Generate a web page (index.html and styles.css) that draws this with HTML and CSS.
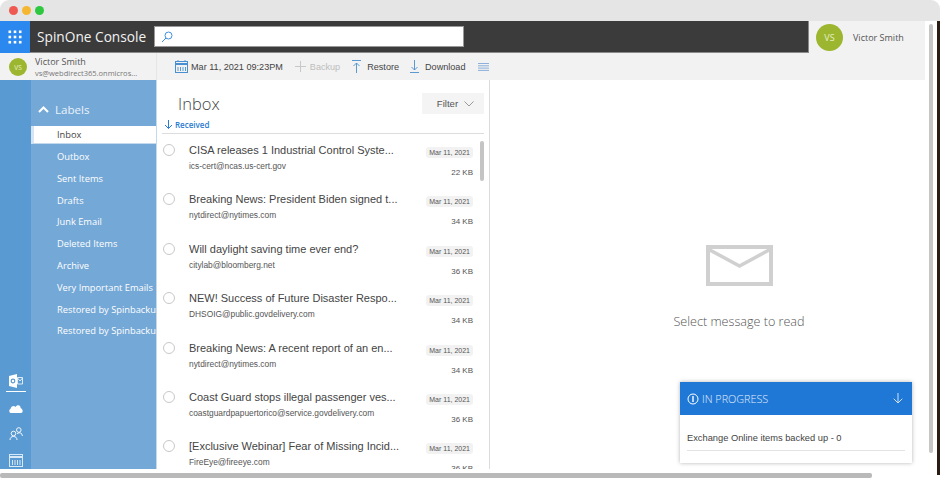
FILE: index.html
```html
<!DOCTYPE html>
<html lang="en">
<head>
    <meta charset="UTF-8">
    <title>SpinOne Console</title>
    <link rel="stylesheet" href="styles.css">
</head>
<body>
    <div class="window">
        <div class="titlebar">
            <span class="dot dot-red"></span>
            <span class="dot dot-yellow"></span>
            <span class="dot dot-green"></span>
        </div>

        <div class="app">
            <div class="topbar">
                <div class="waffle">
                    <svg width="14" height="14" viewBox="0 0 14 14" fill="#fff">
                        <rect x="0.5" y="0.5" width="2.6" height="2.6"/><rect x="5.7" y="0.5" width="2.6" height="2.6"/><rect x="10.9" y="0.5" width="2.6" height="2.6"/>
                        <rect x="0.5" y="5.7" width="2.6" height="2.6"/><rect x="5.7" y="5.7" width="2.6" height="2.6"/><rect x="10.9" y="5.7" width="2.6" height="2.6"/>
                        <rect x="0.5" y="10.9" width="2.6" height="2.6"/><rect x="5.7" y="10.9" width="2.6" height="2.6"/><rect x="10.9" y="10.9" width="2.6" height="2.6"/>
                    </svg>
                </div>
                <div class="brandbar">
                    <span class="brand">SpinOne Console</span>
                    <div class="search">
                        <svg width="12" height="12" viewBox="0 0 12 12" fill="none" stroke="#3f8fe0" stroke-width="1">
                            <circle cx="7.5" cy="4.5" r="3.5"/><path d="M5 7L1 11"/>
                        </svg>
                    </div>
                </div>
                <div class="top-user">
                    <span class="avatar avatar-big">VS</span>
                    <span class="top-user-name">Victor Smith</span>
                </div>
            </div>

            <div class="subbar">
                <div class="account">
                    <span class="avatar">VS</span>
                    <div class="account-text">
                        <div class="account-name">Victor Smith</div>
                        <div class="account-mail">vs@webdirect365.onmicros...</div>
                    </div>
                </div>
                <div class="toolbar">
                    <svg class="tool-icon tool-calendar" width="13" height="13" viewBox="0 0 13 13" fill="none" stroke="#4a8fcf">
                        <rect x="0.5" y="1.5" width="12" height="11"/>
                        <path d="M0.5 4H12.5" stroke-width="2"/>
                        <path d="M3 1V0M10 1V0M3 7V11M5.5 7V11M8 7V11M10.5 7V11" stroke-width="0.9"/>
                    </svg>
                    <span class="tool tool-date">Mar 11, 2021 09:23PM</span>
                    <svg class="tool-icon" width="11" height="11" viewBox="0 0 11 11" fill="none" stroke="#c8c8c8">
                        <path d="M5.5 0V11M0 5.5H11"/>
                    </svg>
                    <span class="tool tool-off">Backup</span>
                    <svg class="tool-icon tool-arrow" width="9" height="13" viewBox="0 0 9 13" fill="none" stroke="#4a8fcf" stroke-width="0.9">
                        <path d="M0 0.5H9M4.5 13V3M1.5 6L4.5 3L7.5 6"/>
                    </svg>
                    <span class="tool tool-restore">Restore</span>
                    <svg class="tool-icon tool-arrow" width="9" height="13" viewBox="0 0 9 13" fill="none" stroke="#4a8fcf" stroke-width="0.9">
                        <path d="M0 12.5H9M4.5 0V10M1.5 7L4.5 10L7.5 7"/>
                    </svg>
                    <span class="tool">Download</span>
                    <svg class="tool-icon tool-lines" width="11" height="8" viewBox="0 0 11 8" fill="none" stroke="#6f9ed4" stroke-width="0.8">
                        <path d="M0 0.5H11M0 2.8H11M0 5.1H11M0 7.4H11"/>
                    </svg>
                </div>
            </div>

            <div class="main">
                <div class="rail">
                    <div class="rail-item rail-active">
                        <svg width="14" height="14" viewBox="0 0 14 14">
                            <path d="M0 2L8 0V14L0 12Z" fill="#fff"/>
                            <circle cx="4" cy="7" r="1.8" fill="none" stroke="#5c9bd1" stroke-width="1.2"/>
                            <path d="M8.5 3.5H13.5V10H8.5Z M8.5 4L11 7L13.5 4" fill="none" stroke="#fff" stroke-width="0.8"/>
                        </svg>
                    </div>
                    <div class="rail-item">
                        <svg width="14" height="9" viewBox="0 0 14 9" fill="#fff">
                            <path d="M2.5 9C0 9 -0.5 6 1.5 5C2 2 5 1 6.5 3C8 0 12 1 11.5 4C14 4.5 14.5 9 12 9Z"/>
                        </svg>
                    </div>
                    <div class="rail-item">
                        <svg width="14" height="14" viewBox="0 0 14 14" fill="none" stroke="#fff" stroke-width="0.9">
                            <circle cx="9.8" cy="3" r="2.3"/>
                            <path d="M8 7C9 5.5 11 5.5 12.5 6.5L13.5 9"/>
                            <circle cx="4.5" cy="6.5" r="2.3"/>
                            <path d="M1 13C1 10.5 2.5 9.5 4.5 9.5C6.5 9.5 8 10.5 8 13"/>
                        </svg>
                    </div>
                    <div class="rail-item">
                        <svg width="14" height="13" viewBox="0 0 14 13" fill="none" stroke="#d9e8f5">
                            <rect x="0.5" y="0.5" width="13" height="12"/>
                            <path d="M0.5 3H13.5" stroke-width="2"/>
                            <path d="M3.5 6V11M6 6V11M8.5 6V11M11 6V11"/>
                        </svg>
                    </div>
                </div>

                <div class="labels">
                    <div class="labels-head">
                        <svg width="11" height="7" viewBox="0 0 11 7" fill="none" stroke="#fff" stroke-width="2">
                            <path d="M1 6L5.5 1.5L10 6"/>
                        </svg>
                        <span>Labels</span>
                    </div>
                    <div class="label label-active">Inbox</div>
                    <div class="label">Outbox</div>
                    <div class="label">Sent Items</div>
                    <div class="label">Drafts</div>
                    <div class="label">Junk Email</div>
                    <div class="label">Deleted Items</div>
                    <div class="label">Archive</div>
                    <div class="label">Very Important Emails</div>
                    <div class="label">Restored by Spinbackup</div>
                    <div class="label">Restored by Spinbackup</div>
                </div>

                <div class="list">
                    <div class="list-head">
                        <h1>Inbox</h1>
                        <div class="filter">Filter
                            <svg width="10" height="6" viewBox="0 0 10 6" fill="none" stroke="#999">
                                <path d="M0.5 0.5L5 5L9.5 0.5"/>
                            </svg>
                        </div>
                    </div>
                    <div class="sort">
                        <svg width="9" height="9" viewBox="0 0 9 9" fill="none" stroke="#2a7bd3">
                            <path d="M4.5 0V8.5M1 5L4.5 8.5L8 5"/>
                        </svg>
                        <span>Received</span>
                    </div>
                    <div class="rows">
                        <div class="row">
                            <span class="check"></span>
                            <div class="row-body">
                                <div class="row-title">CISA releases 1 Industrial Control Syste...</div>
                                <div class="row-from">ics-cert@ncas.us-cert.gov</div>
                            </div>
                            <div class="row-meta"><span class="row-date">Mar 11, 2021</span><span class="row-size">22 KB</span></div>
                        </div>
                        <div class="row">
                            <span class="check"></span>
                            <div class="row-body">
                                <div class="row-title">Breaking News: President Biden signed t...</div>
                                <div class="row-from">nytdirect@nytimes.com</div>
                            </div>
                            <div class="row-meta"><span class="row-date">Mar 11, 2021</span><span class="row-size">34 KB</span></div>
                        </div>
                        <div class="row">
                            <span class="check"></span>
                            <div class="row-body">
                                <div class="row-title">Will daylight saving time ever end?</div>
                                <div class="row-from">citylab@bloomberg.net</div>
                            </div>
                            <div class="row-meta"><span class="row-date">Mar 11, 2021</span><span class="row-size">36 KB</span></div>
                        </div>
                        <div class="row">
                            <span class="check"></span>
                            <div class="row-body">
                                <div class="row-title">NEW! Success of Future Disaster Respo...</div>
                                <div class="row-from">DHSOIG@public.govdelivery.com</div>
                            </div>
                            <div class="row-meta"><span class="row-date">Mar 11, 2021</span><span class="row-size">34 KB</span></div>
                        </div>
                        <div class="row">
                            <span class="check"></span>
                            <div class="row-body">
                                <div class="row-title">Breaking News: A recent report of an en...</div>
                                <div class="row-from">nytdirect@nytimes.com</div>
                            </div>
                            <div class="row-meta"><span class="row-date">Mar 11, 2021</span><span class="row-size">34 KB</span></div>
                        </div>
                        <div class="row">
                            <span class="check"></span>
                            <div class="row-body">
                                <div class="row-title">Coast Guard stops illegal passenger ves...</div>
                                <div class="row-from">coastguardpapuertorico@service.govdelivery.com</div>
                            </div>
                            <div class="row-meta"><span class="row-date">Mar 11, 2021</span><span class="row-size">36 KB</span></div>
                        </div>
                        <div class="row">
                            <span class="check"></span>
                            <div class="row-body">
                                <div class="row-title">[Exclusive Webinar] Fear of Missing Incid...</div>
                                <div class="row-from">FireEye@fireeye.com</div>
                            </div>
                            <div class="row-meta"><span class="row-date">Mar 11, 2021</span><span class="row-size">36 KB</span></div>
                        </div>
                        <div class="list-thumb"></div>
                    </div>
                </div>

                <div class="reader">
                    <svg width="67" height="41" viewBox="0 0 67 41" fill="none" stroke="#d0d0d0" stroke-width="4">
                        <rect x="2" y="2" width="63" height="37"/>
                        <path d="M2 4L33.5 21L65 4" stroke-width="3.5"/>
                    </svg>
                    <div class="reader-text">Select message to read</div>
                </div>
            </div>

            <div class="toast">
                <div class="toast-head">
                    <svg width="12" height="12" viewBox="0 0 12 12" fill="none" stroke="#fff">
                        <circle cx="6" cy="6" r="5"/>
                        <path d="M6 3V9" stroke-width="1.4"/>
                    </svg>
                    <span class="toast-title">IN PROGRESS</span>
                    <svg width="10" height="11" viewBox="0 0 10 11" fill="none" stroke="#cfe2f7">
                        <path d="M5 0V10M0.7 5.7L5 10L9.3 5.7"/>
                    </svg>
                </div>
                <div class="toast-body">
                    <div class="toast-line">Exchange Online items backed up - 0</div>
                </div>
            </div>
        </div>

        <div class="scroll-v"></div>
        <div class="scroll-h"></div>
        <div class="edge"></div>
    </div>
</body>
</html>
```

FILE: styles.css
```css
* {
    box-sizing: border-box;
}
html, body {
    margin: 0;
    height: 100%;
    overflow: hidden;
    background-color: #fff;
}
.window {
    position: relative;
    width: 940px;
    height: 480px;
    font-family: "Liberation Sans", Arial, sans-serif;
    color: #444;
}
.titlebar {
    height: 21px;
    display: flex;
    align-items: center;
    gap: 4px;
    padding: 0 0 0 9px;
    background-color: #e5e5e5;
    border-radius: 9px 9px 0 0;
}
.dot {
    width: 9px;
    height: 9px;
    border-radius: 50%;
}
.dot-red { background-color: #ee5a52; }
.dot-yellow { background-color: #f5b631; }
.dot-green { background-color: #2ec840; }

.app {
    position: relative;
    width: 925px;
    height: 448px;
    display: flex;
    flex-direction: column;
}
.topbar {
    height: 32px;
    display: flex;
}
.waffle {
    width: 30px;
    display: flex;
    align-items: center;
    justify-content: center;
    background-color: #2b88ee;
}
.brandbar {
    flex: 1;
    display: flex;
    align-items: center;
    padding: 0 0 0 7px;
    background-color: #3b3b3b;
    border-bottom: 1px solid #8a8a8a;
    border-right: 1px solid #8a8a8a;
}
.brand {
    width: 117px;
    font-family: "Open Sans", sans-serif;
    font-size: 13.7px;
    color: #f2f2f2;
    white-space: nowrap;
}
.search {
    width: 310px;
    height: 21px;
    padding: 4px 0 0 6px;
    background-color: #fff;
    border: 1px solid #999;
}
.search svg {
    display: block;
}
.top-user {
    width: 116px;
    display: flex;
    align-items: center;
    gap: 10px;
    padding-left: 7px;
    background-color: #f2f2f2;
}
.avatar {
    width: 18px;
    height: 18px;
    flex: none;
    display: flex;
    align-items: center;
    justify-content: center;
    border-radius: 50%;
    font-family: "Open Sans", sans-serif;
    font-size: 6.5px;
    color: #e6efc8;
    background-color: #9db62f;
}
.avatar-big {
    width: 27px;
    height: 27px;
    font-size: 9px;
}
.top-user-name {
    font-family: "Open Sans", sans-serif;
    font-size: 9px;
    color: #555;
}

.subbar {
    height: 27px;
    display: flex;
    background-color: #f2f2f2;
}
.account {
    width: 157px;
    display: flex;
    align-items: center;
    gap: 8px;
    padding: 1px 0 0 9px;
    border-right: 1px solid #e6e6e6;
}
.account-text {
    padding-top: 1px;
}
.account-name {
    font-family: "Open Sans", sans-serif;
    font-size: 9px;
    line-height: 12px;
    color: #555;
}
.account-mail {
    font-family: "Open Sans", sans-serif;
    font-size: 7.5px;
    line-height: 11px;
    color: #777;
    white-space: nowrap;
}
.toolbar {
    flex: 1;
    display: flex;
    align-items: center;
    padding-left: 18px;
}
.tool {
    font-size: 9.1px;
    color: #444;
    white-space: nowrap;
}
.tool-icon {
    flex: none;
    margin-right: 4px;
}
.tool-calendar {
    margin-right: 3px;
}
.tool-date {
    margin-right: 12px;
}
.tool-off {
    color: #bdbdbd;
    margin-right: 12px;
}
.tool-arrow {
    margin-right: 6px;
}
.tool-restore {
    margin-right: 11px;
}
.tool-lines {
    margin-left: 13px;
}

.main {
    flex: 1;
    display: flex;
    min-height: 0;
}
.rail {
    width: 31px;
    display: flex;
    flex-direction: column;
    align-items: center;
    padding-top: 291px;
    background-color: #5a9ad2;
    overflow: hidden;
}
.rail-item {
    width: 20px;
    height: 26px;
    flex: none;
    display: flex;
    align-items: center;
    justify-content: center;
}
.rail-active {
    height: 21px;
    margin-bottom: 3px;
    border-bottom: 1px solid #fff;
}
.labels {
    width: 126px;
    flex: none;
    background-color: #74a8d6;
    overflow: hidden;
    border-right: 1px solid #c5d9ec;
}
.labels-head {
    height: 46px;
    display: flex;
    align-items: center;
    gap: 6px;
    padding: 13px 0 0 7px;
    font-family: "Open Sans", sans-serif;
    font-size: 11.6px;
    color: #eaf2fa;
}
.label {
    height: 21.8px;
    padding-left: 26px;
    font-family: "Open Sans", sans-serif;
    font-size: 9.3px;
    line-height: 21.8px;
    color: #fff;
    white-space: nowrap;
}
.label-active {
    height: 18px;
    line-height: 18px;
    margin-bottom: 2px;
    padding-left: 23px;
    color: #444;
    background-color: #fff;
    border-left: 3px solid #d5e5f3;
    border-bottom: 1px solid #c5d9ec;
}

.list {
    width: 333px;
    flex: none;
    display: flex;
    flex-direction: column;
    padding: 13px 5px 0 5px;
    border-right: 1px solid #dcdcdc;
}
.list-head {
    height: 21px;
    display: flex;
    align-items: center;
    justify-content: space-between;
    padding-left: 16px;
}
.list-head h1 {
    margin: 0;
    font-family: "Open Sans", sans-serif;
    font-weight: 300;
    font-size: 16.5px;
    color: #444;
}
.filter {
    width: 62px;
    height: 21px;
    display: flex;
    align-items: center;
    justify-content: center;
    gap: 6px;
    padding-left: 5px;
    font-size: 9.6px;
    color: #555;
    background-color: #f4f4f4;
}
.sort {
    height: 20px;
    display: flex;
    align-items: center;
    gap: 2px;
    padding: 1px 0 0 2px;
    font-family: "Open Sans", sans-serif;
    font-size: 8px;
    font-weight: 600;
    color: #2a7bd3;
    border-bottom: 1px solid #ddd;
}
.rows {
    position: relative;
    flex: 1;
    overflow: hidden;
    padding-top: 8px;
}
.row {
    height: 49.4px;
    display: flex;
}
.check {
    width: 12px;
    height: 12px;
    flex: none;
    margin: 2px 0 0 1px;
    border: 1px solid #c8c8c8;
    border-radius: 50%;
}
.row-body {
    flex: 1;
    min-width: 0;
    padding-left: 14px;
}
.row-title {
    font-size: 11px;
    line-height: 16px;
    color: #444;
    white-space: nowrap;
}
.row-from {
    margin-top: 2px;
    font-size: 8.4px;
    line-height: 12px;
    color: #555;
    white-space: nowrap;
}
.row-meta {
    width: 56px;
    margin-right: 11px;
    display: flex;
    flex-direction: column;
    align-items: flex-end;
    flex: none;
}
.row-date {
    padding: 1px 3px;
    margin-top: 5px;
    font-size: 7px;
    line-height: 9px;
    color: #555;
    background-color: #f2f2f2;
    border-radius: 3px;
    white-space: nowrap;
}
.row-size {
    margin-top: 10px;
    font-size: 8px;
    line-height: 10px;
    color: #555;
}
.list-thumb {
    position: absolute;
    top: 7px;
    right: 0;
    width: 4px;
    height: 40px;
    border-radius: 2px;
    background-color: #c4c4c4;
}

.reader {
    flex: 1;
    display: flex;
    flex-direction: column;
    align-items: center;
    padding: 165px 0 0 63px;
}
.reader-text {
    margin-top: 27px;
    font-family: "Open Sans", sans-serif;
    font-weight: 300;
    font-size: 12.6px;
    color: #555;
    white-space: nowrap;
}

.toast {
    position: absolute;
    left: 680px;
    top: 361px;
    width: 232px;
    height: 81px;
    background-color: #fff;
    box-shadow: 0 0 4px rgba(0, 0, 0, 0.3);
}
.toast-head {
    height: 33px;
    display: flex;
    align-items: center;
    padding: 0 9px 0 7px;
    background-color: #1f78d6;
}
.toast-title {
    flex: 1;
    margin-left: 3px;
    font-family: "Open Sans", sans-serif;
    font-weight: 300;
    font-size: 10.8px;
    color: #e2eefb;
}
.toast-body {
    padding: 17px 7px 0 7px;
}
.toast-line {
    padding-bottom: 6px;
    font-size: 9.3px;
    line-height: 12px;
    color: #444;
    border-bottom: 1px solid #e4e4e4;
}

.scroll-v {
    position: absolute;
    top: 24px;
    left: 929px;
    width: 4px;
    height: 429px;
    border-radius: 2px;
    background-color: #c6c6c6;
}
.scroll-h {
    position: absolute;
    left: 0;
    top: 473px;
    width: 872px;
    height: 5px;
    border-radius: 2px;
    background-color: #b9b9b9;
}
.edge {
    position: absolute;
    top: 21px;
    right: 0;
    width: 3px;
    height: 454px;
    background-color: #2a1c14;
}
```
